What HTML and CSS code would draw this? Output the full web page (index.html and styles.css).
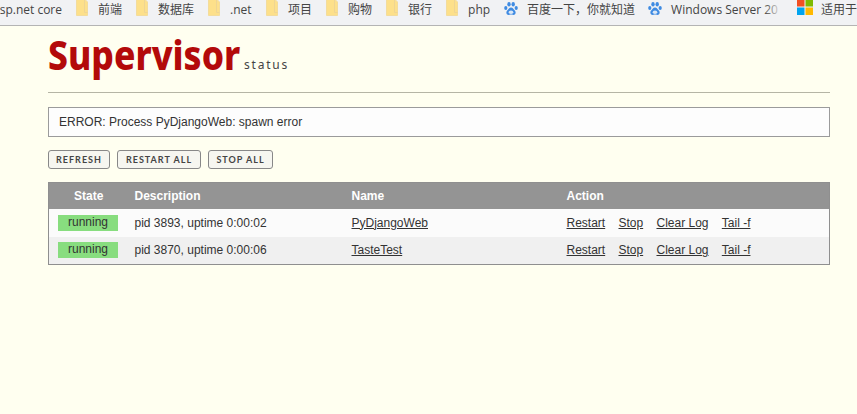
FILE: index.html
```html
<!DOCTYPE html>
<html lang="zh">
<head>
<meta charset="utf-8">
<title>Supervisor Status</title>
<link rel="stylesheet" href="styles.css">
</head>
<body>
<nav class="bookmarks">
  <span class="bm bm-first"><span class="latin">sp.net core</span></span>
  <span class="bm"><svg class="folder" viewBox="0 0 12 16"><path d="M.5-1h8l3 3v13.500H.5z" fill="#fde08a" stroke="#f3dc9c"/><path d="M8.500 0v12.500h3" fill="none" stroke="#eed594"/></svg><span>前端</span></span>
  <span class="bm"><svg class="folder" viewBox="0 0 12 16"><path d="M.5-1h8l3 3v13.500H.5z" fill="#fde08a" stroke="#f3dc9c"/><path d="M8.500 0v12.500h3" fill="none" stroke="#eed594"/></svg><span>数据库</span></span>
  <span class="bm"><svg class="folder" viewBox="0 0 12 16"><path d="M.5-1h8l3 3v13.500H.5z" fill="#fde08a" stroke="#f3dc9c"/><path d="M8.500 0v12.500h3" fill="none" stroke="#eed594"/></svg><span class="latin short">.net</span></span>
  <span class="bm"><svg class="folder" viewBox="0 0 12 16"><path d="M.5-1h8l3 3v13.500H.5z" fill="#fde08a" stroke="#f3dc9c"/><path d="M8.500 0v12.500h3" fill="none" stroke="#eed594"/></svg><span>项目</span></span>
  <span class="bm"><svg class="folder" viewBox="0 0 12 16"><path d="M.5-1h8l3 3v13.500H.5z" fill="#fde08a" stroke="#f3dc9c"/><path d="M8.500 0v12.500h3" fill="none" stroke="#eed594"/></svg><span>购物</span></span>
  <span class="bm"><svg class="folder" viewBox="0 0 12 16"><path d="M.5-1h8l3 3v13.500H.5z" fill="#fde08a" stroke="#f3dc9c"/><path d="M8.500 0v12.500h3" fill="none" stroke="#eed594"/></svg><span>银行</span></span>
  <span class="bm"><svg class="folder" viewBox="0 0 12 16"><path d="M.5-1h8l3 3v13.500H.5z" fill="#fde08a" stroke="#f3dc9c"/><path d="M8.500 0v12.500h3" fill="none" stroke="#eed594"/></svg><span class="latin short">php</span></span>
  <span class="bm bm-paw"><svg class="paw" viewBox="0 0 14 14"><g fill="#3f8be2"><ellipse cx="1.800" cy="6" rx="1.600" ry="2"/><ellipse cx="5" cy="2.300" rx="1.700" ry="2.200"/><ellipse cx="9.200" cy="2.300" rx="1.700" ry="2.200"/><ellipse cx="12.200" cy="6" rx="1.600" ry="2"/><path d="M7 5.500c-2 0-2.400 1.800-3.800 3-1.500 1.300-1 4.500 1.500 4.500 1 0 1.500-.4 2.300-.4s1.300.4 2.300.4c2.500 0 3-3.200 1.500-4.500C9.400 7.300 9 5.500 7 5.500z"/></g><ellipse cx="7" cy="10.300" rx="2.300" ry="1.800" fill="#dbe8f7"/></svg><span>百度一下，你就知道</span></span>
  <span class="bm bm-paw bm-tight"><svg class="paw" viewBox="0 0 14 14"><g fill="#3f8be2"><ellipse cx="1.800" cy="6" rx="1.600" ry="2"/><ellipse cx="5" cy="2.300" rx="1.700" ry="2.200"/><ellipse cx="9.200" cy="2.300" rx="1.700" ry="2.200"/><ellipse cx="12.200" cy="6" rx="1.600" ry="2"/><path d="M7 5.500c-2 0-2.400 1.800-3.800 3-1.500 1.300-1 4.500 1.500 4.500 1 0 1.500-.4 2.300-.4s1.300.4 2.300.4c2.500 0 3-3.200 1.500-4.500C9.400 7.300 9 5.500 7 5.500z"/></g><ellipse cx="7" cy="10.300" rx="2.300" ry="1.800" fill="#dbe8f7"/></svg><span class="latin fade">Windows Server 20</span></span>
  <span class="bm bm-ms"><svg class="ms" viewBox="0 0 16 16"><rect width="7.500" height="7.500" fill="#f25022"/><rect x="8.500" width="7.500" height="7.500" fill="#7fba00"/><rect y="8.500" width="7.500" height="7.500" fill="#00a4ef"/><rect x="8.500" y="8.500" width="7.500" height="7.500" fill="#ffb900"/></svg><span>适用于</span></span>
</nav>
<main class="wrapper">
  <header class="masthead">
    <span class="logo"><span class="logo-word">Supervisor</span></span>
    <span class="logo-sub">status</span>
  </header>
  <div class="message">ERROR: Process PyDjangoWeb: spawn error</div>
  <ul class="buttons">
    <li><a class="btn">REFRESH</a></li>
    <li><a class="btn">RESTART ALL</a></li>
    <li><a class="btn">STOP ALL</a></li>
  </ul>
  <table class="procs">
    <thead>
      <tr><th>State</th><th>Description</th><th>Name</th><th>Action</th></tr>
    </thead>
    <tbody>
      <tr>
        <td><span class="status">running</span></td>
        <td>pid 3893, uptime 0:00:02</td>
        <td><a href="#">PyDjangoWeb</a></td>
        <td class="actions"><a href="#">Restart</a><a href="#">Stop</a><a href="#">Clear Log</a><a href="#">Tail -f</a></td>
      </tr>
      <tr class="shade">
        <td><span class="status">running</span></td>
        <td>pid 3870, uptime 0:00:06</td>
        <td><a href="#">TasteTest</a></td>
        <td class="actions"><a href="#">Restart</a><a href="#">Stop</a><a href="#">Clear Log</a><a href="#">Tail -f</a></td>
      </tr>
    </tbody>
  </table>
</main>
</body>
</html>
```
FILE: styles.css
```css
* { box-sizing: border-box; }
html, body { margin: 0; padding: 0; height: 100%; overflow: hidden; }
body {
  background: #fffff0;
  color: #333;
  font-family: "Liberation Sans", Arial, sans-serif;
  font-size: 12px;
}
.bookmarks {
  display: flex;
  align-items: flex-start;
  height: 26px;
  background: #f1f2f4;
  border-bottom: 1px solid #b4b4b4;
  color: #444;
  font-family: "Open Sans", "Noto Sans CJK SC", sans-serif;
  font-size: 12px;
  line-height: 19px;
  white-space: nowrap;
  overflow: hidden;
}
.latin { font-size: 12px; }
.short { display: block; width: 22px; }
.bm { display: flex; align-items: flex-start; flex: none; margin-left: 14px; gap: 10px; }
.bm-first { margin-left: 0; width: 62px; justify-content: flex-end; }
.bm-paw { gap: 9px; }
.bm-tight { margin-left: 13px; }
.bm-ms { margin-left: 15px; gap: 8px; }
.folder { width: 12px; height: 16px; flex: none; }
.paw { width: 14px; height: 14px; flex: none; margin-top: 2px; }
.ms { width: 16px; height: 16px; flex: none; margin-top: -1px; }
.fade { display: block; position: relative; width: 111px; }
.fade::after {
  content: "";
  position: absolute;
  top: 0;
  right: 0;
  bottom: 0;
  width: 18px;
  background: linear-gradient(to right, rgba(241, 242, 244, 0), #f1f2f4);
}
.wrapper { width: 782px; margin-left: 48px; }
.masthead {
  display: flex;
  align-items: flex-end;
  height: 67px;
  border-bottom: 1px solid #b5b5a5;
  padding-bottom: 19px;
}
.logo { display: block; flex: none; width: 192px; height: 38px; }
.logo-word {
  display: inline-block;
  color: #b30a0a;
  font-family: "Noto Sans", sans-serif;
  font-weight: 800;
  font-size: 41px;
  line-height: 38px;
  transform: scaleX(.865);
  transform-origin: left center;
}
.logo-sub {
  color: #444;
  font-family: "Noto Sans", sans-serif;
  font-size: 12px;
  letter-spacing: 1.8px;
  margin-left: 4px;
  line-height: 16px;
}
.message {
  margin-top: 14px;
  height: 30px;
  line-height: 28px;
  background: #fdfdfd;
  border: 1px solid #9b9b9b;
  padding-left: 10px;
  color: #333;
}
.buttons { display: flex; gap: 7px; list-style: none; margin: 13px 0 0; padding: 0; }
.buttons li:nth-child(1) { width: 62px; }
.buttons li:nth-child(2) { width: 84px; }
.buttons li:nth-child(3) { width: 65px; }
.btn {
  display: block;
  height: 19px;
  line-height: 17px;
  text-align: center;
  border: 1px solid #888;
  border-radius: 3px;
  background: #f6f6f0;
  color: #444;
  font-family: "Lato", sans-serif;
  font-size: 9px;
  font-weight: 700;
  letter-spacing: 1px;
}
.procs {
  width: 782px;
  margin-top: 13px;
  border-collapse: collapse;
  border: 1px solid #8f8f8f;
  table-layout: fixed;
  background: #fbfbfb;
}
.procs th {
  background: #949494;
  color: #fff;
  height: 26px;
  text-align: left;
  font-weight: 700;
  padding: 1px 0 0;
}
.procs td { height: 28px; padding: 0; color: #333; }
.shade td { background: #f0f0f0; }
.procs th:nth-child(1) { width: 86px; text-align: center; padding-right: 6px; }
.procs th:nth-child(2) { width: 217px; }
.procs th:nth-child(3) { width: 215px; }
.status {
  display: block;
  width: 60px;
  height: 16px;
  line-height: 15px;
  margin-left: 9px;
  background: #88dd7f;
  text-align: center;
}
a { color: #333; }
.actions a { margin-right: 13.3px; }
```
